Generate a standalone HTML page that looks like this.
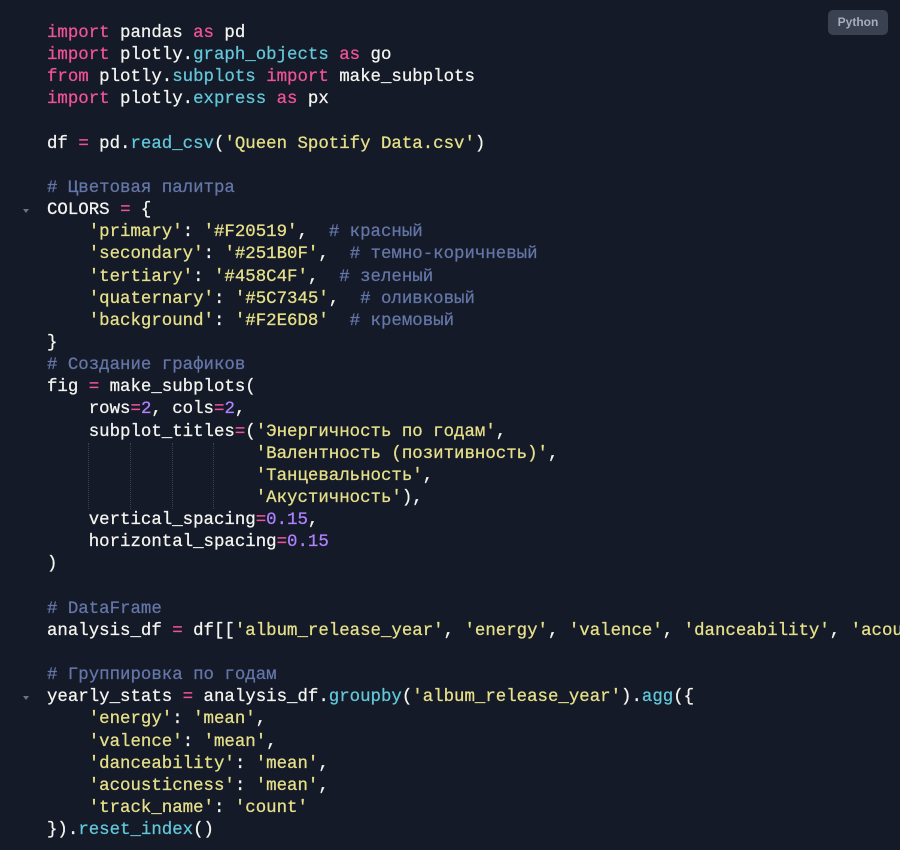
<!DOCTYPE html>
<html><head><meta charset="utf-8"><style>
html,body{margin:0;padding:0;background:#141a27;width:900px;height:850px;overflow:hidden}
pre{margin:0;position:absolute;left:47px;top:23px;width:853px;overflow:hidden;font-family:"Liberation Mono","DejaVu Sans Mono",monospace;font-size:17.4px;line-height:22.14px;color:#f5f5f0;white-space:pre;-webkit-text-stroke:0.25px currentColor}
.k{color:#f0529c}.f{color:#62c7d9}.s{color:#e7e08a}.c{color:#6576a8}.n{color:#ae81ff}
.badge{position:absolute;left:828px;top:10px;width:60px;height:25px;background:#3a4150;border-radius:5px;color:#a6adbb;font:bold 12px "Liberation Sans",sans-serif;line-height:25px;text-align:center}
.arr{position:absolute;left:23px;width:0;height:0;border-left:3px solid transparent;border-right:3px solid transparent;border-top:4px solid #6b7280}
.g{position:absolute;top:443px;height:66px;border-left:1px dotted #3a4150}
</style></head><body>
<div class="badge">Python</div>
<div class="arr" style="top:209px"></div>
<div class="arr" style="top:696px"></div>
<div class="g" style="left:88px"></div><div class="g" style="left:130px"></div><div class="g" style="left:172px"></div><div class="g" style="left:213px"></div>
<pre><span class="k">import</span> pandas <span class="k">as</span> pd
<span class="k">import</span> plotly.<span class="f">graph_objects</span> <span class="k">as</span> go
<span class="k">from</span> plotly.<span class="f">subplots</span> <span class="k">import</span> make_subplots
<span class="k">import</span> plotly.<span class="f">express</span> <span class="k">as</span> px

df <span class="k">=</span> pd.<span class="f">read_csv</span>(<span class="s">'Queen Spotify Data.csv'</span>)

<span class="c"># Цветовая палитра</span>
COLORS <span class="k">=</span> {
    <span class="s">'primary'</span>: <span class="s">'#F20519'</span>,  <span class="c"># красный</span>
    <span class="s">'secondary'</span>: <span class="s">'#251B0F'</span>,  <span class="c"># темно-коричневый</span>
    <span class="s">'tertiary'</span>: <span class="s">'#458C4F'</span>,  <span class="c"># зеленый</span>
    <span class="s">'quaternary'</span>: <span class="s">'#5C7345'</span>,  <span class="c"># оливковый</span>
    <span class="s">'background'</span>: <span class="s">'#F2E6D8'</span>  <span class="c"># кремовый</span>
}
<span class="c"># Создание графиков</span>
fig <span class="k">=</span> make_subplots(
    rows<span class="k">=</span><span class="n">2</span>, cols<span class="k">=</span><span class="n">2</span>,
    subplot_titles<span class="k">=</span>(<span class="s">'Энергичность по годам'</span>,
                    <span class="s">'Валентность (позитивность)'</span>,
                    <span class="s">'Танцевальность'</span>,
                    <span class="s">'Акустичность'</span>),
    vertical_spacing<span class="k">=</span><span class="n">0.15</span>,
    horizontal_spacing<span class="k">=</span><span class="n">0.15</span>
)

<span class="c"># DataFrame</span>
analysis_df <span class="k">=</span> df[[<span class="s">'album_release_year'</span>, <span class="s">'energy'</span>, <span class="s">'valence'</span>, <span class="s">'danceability'</span>, <span class="s">'acou</span>

<span class="c"># Группировка по годам</span>
yearly_stats <span class="k">=</span> analysis_df.<span class="f">groupby</span>(<span class="s">'album_release_year'</span>).<span class="f">agg</span>({
    <span class="s">'energy'</span>: <span class="s">'mean'</span>,
    <span class="s">'valence'</span>: <span class="s">'mean'</span>,
    <span class="s">'danceability'</span>: <span class="s">'mean'</span>,
    <span class="s">'acousticness'</span>: <span class="s">'mean'</span>,
    <span class="s">'track_name'</span>: <span class="s">'count'</span>
}).<span class="f">reset_index</span>()</pre>
</body></html>
